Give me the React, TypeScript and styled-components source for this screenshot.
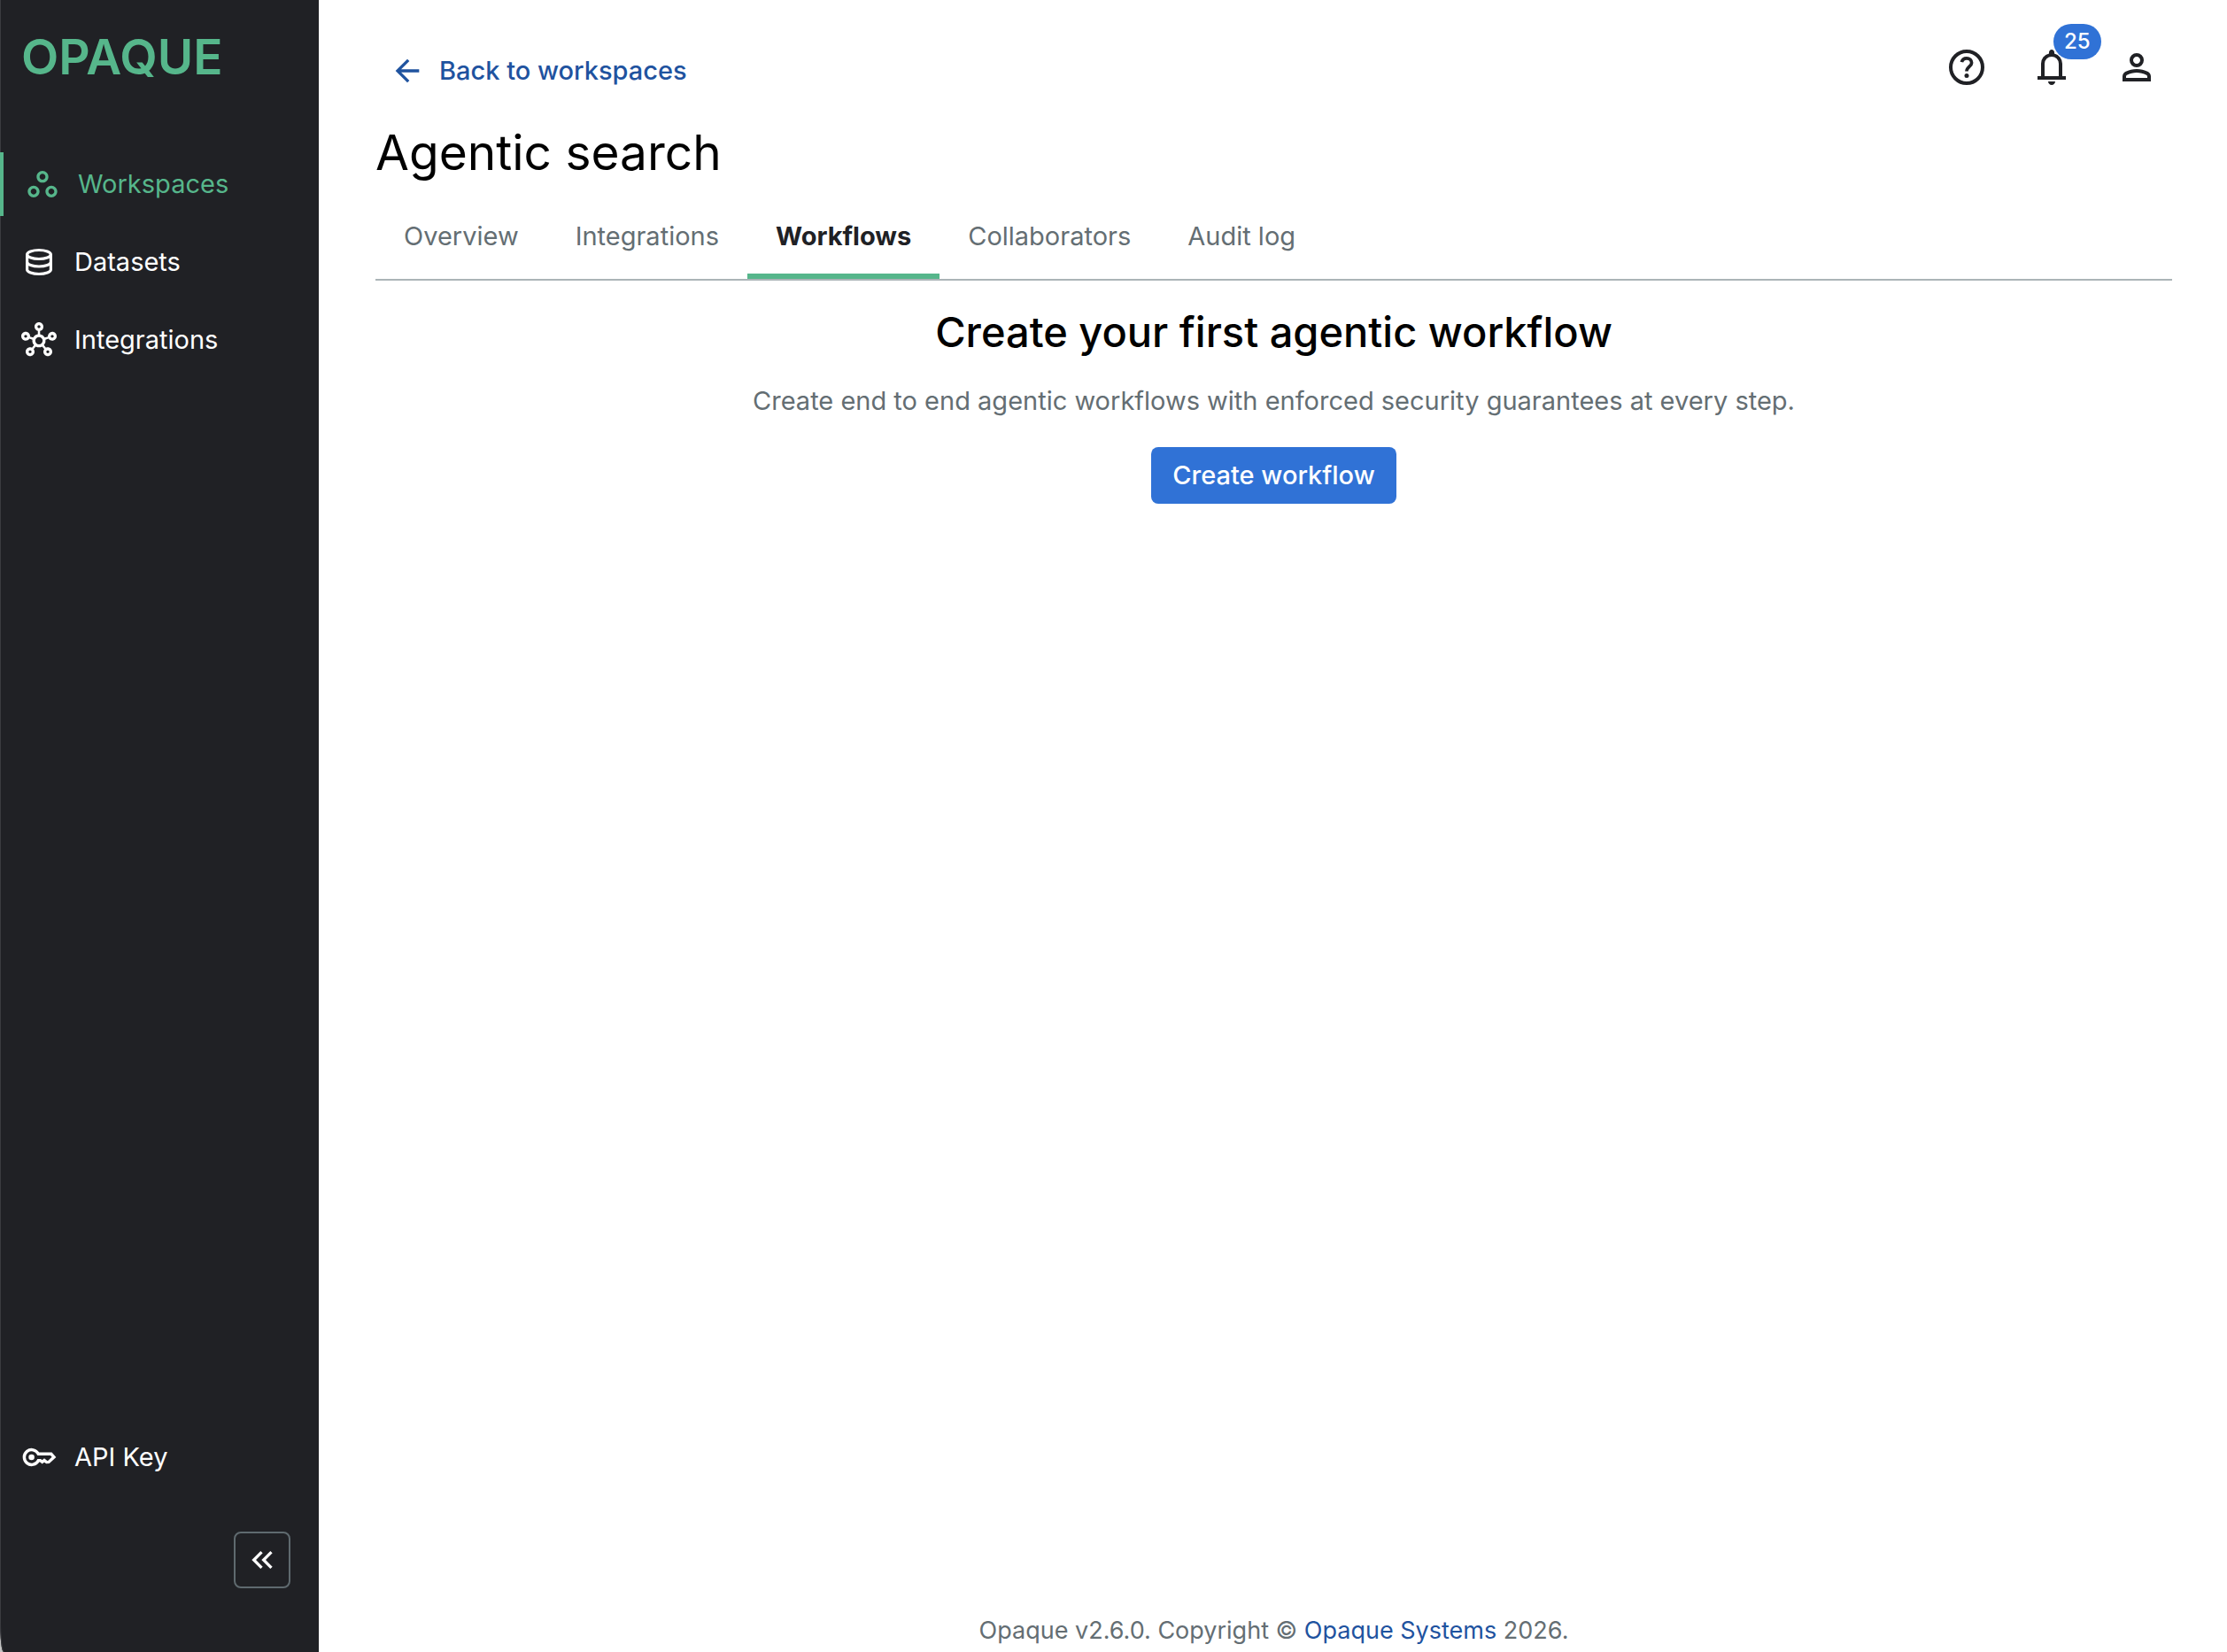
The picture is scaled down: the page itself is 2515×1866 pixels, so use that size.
import React from "react";
import styled, { createGlobalStyle, css } from "styled-components";
import {
  MdArrowBack,
  MdKeyboardDoubleArrowLeft,
  MdOutlineHub,
  MdOutlineWorkspaces,
} from "react-icons/md";

const color = {
  ink: "#202125",
  edge: "#3b3c40",
  green: "#56b68b",
  blue: "#3072d6",
  link: "#1f539f",
  muted: "#646e73",
  line: "#abb4b7",
  white: "#ffffff",
};

const GlobalStyle = createGlobalStyle`
  *, *::before, *::after { box-sizing: border-box; }
  body {
    margin: 0;
    background: ${color.white};
    font-family: Inter, "Liberation Sans", sans-serif;
    font-size: 29px;
    line-height: 40px;
  }
  a { color: inherit; text-decoration: none; }
  button { font: inherit; cursor: pointer; }
`;

const Shell = styled.div`
  display: flex;
  min-height: 100vh;
  background: linear-gradient(to right, #c4c4c4 50%, ${color.white} 50%);
`;

const Sidebar = styled.aside`
  display: flex;
  flex-direction: column;
  flex: 0 0 360px;
  padding: 32px 0 72px;
  color: ${color.white};
  background: ${color.ink};
  box-shadow: inset 1px 0 ${color.edge};
  border-bottom-left-radius: 4px 36px;
`;

const Logo = styled.a`
  padding: 0 24px;
  font-size: 55px;
  font-weight: 600;
  line-height: 64px;
  && { color: ${color.green}; }
`;

const Nav = styled.nav`
  display: flex;
  flex-direction: column;
  flex: 1;
  gap: 16px;
  margin-top: 76px;
`;

const NavItem = styled.a<{ $active?: boolean; $last?: boolean }>`
  display: flex;
  align-items: center;
  gap: 20px;
  height: 72px;
  padding: 0 24px;
  ${(p) => p.$last && css`margin-top: auto;`}
  ${(p) =>
    p.$active &&
    css`
      border-left: 4px solid ${color.green};
      && { color: ${color.green}; }
    `}
  svg { width: 40px; height: 40px; flex: none; }
`;

const Collapse = styled.button`
  display: grid;
  place-items: center;
  align-self: flex-end;
  width: 64px;
  height: 64px;
  margin: 48px 32px 0 0;
  padding: 0;
  color: ${color.white};
  background: none;
  border: 2px solid #5f6a6f;
  border-radius: 8px;
`;

const Main = styled.main`
  display: flex;
  flex-direction: column;
  flex: 1;
  min-width: 0;
  padding: 40px 62px 4px 64px;
  background: ${color.white};
`;

const TopBar = styled.header`
  display: flex;
  align-items: center;
  justify-content: space-between;
  height: 72px;
`;

const BackLink = styled.a`
  display: flex;
  align-items: center;
  gap: 16px;
  padding: 8px 16px 0;
  font-weight: 500;
  && { color: ${color.link}; }
`;

const Actions = styled.div`
  display: flex;
  gap: 32px;
  padding-right: 8px;
`;

const IconButton = styled.button`
  position: relative;
  display: grid;
  place-items: center;
  width: 64px;
  height: 64px;
  padding: 0;
  color: ${color.ink};
  background: none;
  border: 0;
  svg { width: 48px; height: 48px; }
`;

const Badge = styled.span`
  position: absolute;
  left: 34px;
  bottom: 41px;
  padding: 0 12px;
  color: ${color.white};
  background: ${color.blue};
  border-radius: 20px;
  font-size: 24px;
  font-weight: 500;
  line-height: 40px;
`;

const Title = styled.h1`
  margin: 24px 0 0;
  font-size: 55px;
  font-weight: 400;
  line-height: 72px;
  color: #000;
`;

const Tabs = styled.nav`
  display: flex;
  margin-top: 24px;
  border-bottom: 2px solid ${color.line};
`;

const Tab = styled.a<{ $active?: boolean }>`
  padding: 15px 32px 22px;
  border-bottom: 6px solid ${(p) => (p.$active ? color.green : "transparent")};
  && { color: ${(p) => (p.$active ? color.ink : color.muted)}; }
  font-weight: ${(p) => (p.$active ? 700 : 400)};
`;

const Empty = styled.section`
  display: flex;
  flex-direction: column;
  align-items: center;
  flex: 1;
  padding-top: 24px;
  text-align: center;
`;

const Heading = styled.h2`
  margin: 0;
  font-size: 47px;
  font-weight: 500;
  line-height: 68px;
  color: #000;
`;

const Lead = styled.p`
  margin: 24px 0 32px;
  color: ${color.muted};
`;

const Primary = styled.button`
  height: 64px;
  padding: 0 24px;
  color: ${color.white};
  background: ${color.blue};
  border: 0;
  border-radius: 8px;
  && { font-weight: 500; }
`;

const Footer = styled.footer`
  text-align: center;
  font-size: 27px;
  color: ${color.muted};
  a { color: ${color.link}; }
`;

const DatabaseIcon = () => (
  <svg viewBox="0 0 40 40" fill="none" stroke="currentColor" strokeWidth="3.2" aria-hidden="true">
    <ellipse cx="20" cy="11.5" rx="13.4" ry="5" />
    <path d="M6.6 11.5v17c0 2.8 6 5 13.4 5s13.4-2.2 13.4-5v-17" />
    <path d="M6.6 20c0 2.8 6 5 13.4 5s13.4-2.2 13.4-5" />
  </svg>
);

const KeyIcon = () => (
  <svg viewBox="0 0 40 40" fill="none" stroke="currentColor" strokeWidth="3.4" aria-hidden="true">
    <path d="M19.3 16.3A8.4 8.4 0 1 0 19.3 23.7H21.500L23.700 25.300L26 23.500L28.600 25.600L31 25.400L37 19.800L33.800 16.3Z" />
    <circle cx="11.6" cy="20" r="3.3" fill="currentColor" stroke="none" />
  </svg>
);

const HelpIcon = () => (
  <svg viewBox="0 0 24 24" fill="none" stroke="currentColor" strokeWidth="2" aria-hidden="true">
    <circle cx="12" cy="12" r="9" />
    <path strokeWidth="1.85" d="M9.2 9.1C9.5 7.7 10.6 6.9 12 6.9c1.7 0 2.8 1.1 2.8 2.6 0 2-2.8 2.2-2.8 4.8" />
    <circle cx="12" cy="16.8" r="1.25" fill="currentColor" stroke="none" />
  </svg>
);

const BellIcon = () => (
  <svg viewBox="0 0 24 24" fill="currentColor" aria-hidden="true">
    <path d="M4 19v-2h2v-7q0-2.075 1.25-3.688T10.5 4.2v-.7q0-.625.438-1.062T12 2t1.063.438T13.5 3.5v.7q2 .5 3.25 2.113T18 10v7h2v2zm8 3q-.825 0-1.412-.587T10 20h4q0 .825-.587 1.413T12 22m-4-5h8v-7q0-1.65-1.175-2.825T12 6 9.175 7.175 8 10z" />
  </svg>
);

const PersonIcon = () => (
  <svg viewBox="0 0 24 24" fill="currentColor" aria-hidden="true">
    <path d="M12 12q-1.65 0-2.825-1.175T8 8t1.175-2.825T12 4t2.825 1.175T16 8t-1.175 2.825T12 12m-8 8v-2.8q0-.85.438-1.562T5.6 14.55q1.55-.775 3.15-1.162T12 13t3.25.388 3.15 1.162q.725.375 1.163 1.088T20 17.2V20zm2-2h12v-.8q0-.275-.137-.5t-.363-.35q-1.35-.675-2.725-1.012T12 15t-2.775.338T6.5 16.35q-.225.125-.363.35T6 17.2zm6-8q.825 0 1.413-.587T14 8t-.587-1.412T12 6t-1.412.588T10 8t.588 1.413T12 10" />
  </svg>
);

const tabs = ["Overview", "Integrations", "Workflows", "Collaborators", "Audit log"];

export default function App() {
  return (
    <>
      <GlobalStyle />
      <Shell>
        <Sidebar>
          <Logo href="#home">OPAQUE</Logo>
          <Nav aria-label="Main">
            <NavItem href="#workspaces" $active aria-current="page">
              <MdOutlineWorkspaces aria-hidden="true" />
              Workspaces
            </NavItem>
            <NavItem href="#datasets">
              <DatabaseIcon />
              Datasets
            </NavItem>
            <NavItem href="#integrations">
              <MdOutlineHub aria-hidden="true" />
              Integrations
            </NavItem>
            <NavItem href="#api-key" $last>
              <KeyIcon />
              API Key
            </NavItem>
          </Nav>
          <Collapse type="button" aria-label="Collapse sidebar">
            <MdKeyboardDoubleArrowLeft size={40} aria-hidden="true" />
          </Collapse>
        </Sidebar>
        <Main>
          <TopBar>
            <BackLink href="#workspaces">
              <MdArrowBack size={40} aria-hidden="true" />
              Back to workspaces
            </BackLink>
            <Actions>
              <IconButton type="button" aria-label="Help">
                <HelpIcon />
              </IconButton>
              <IconButton type="button" aria-label="Notifications">
                <BellIcon />
                <Badge>25</Badge>
              </IconButton>
              <IconButton type="button" aria-label="Account">
                <PersonIcon />
              </IconButton>
            </Actions>
          </TopBar>
          <Title>Agentic search</Title>
          <Tabs aria-label="Workspace">
            {tabs.map((name) => (
              <Tab
                key={name}
                href={"#" + name.toLowerCase().replace(" ", "-")}
                $active={name === "Workflows"}
                aria-current={name === "Workflows" ? "page" : undefined}
              >
                {name}
              </Tab>
            ))}
          </Tabs>
          <Empty>
            <Heading>Create your first agentic workflow</Heading>
            <Lead>
              Create end to end agentic workflows with enforced security guarantees at every step.
            </Lead>
            <Primary type="button">Create workflow</Primary>
          </Empty>
          <Footer>
            Opaque v2.6.0. Copyright © <a href="#opaque-systems">Opaque Systems</a> 2026.
          </Footer>
        </Main>
      </Shell>
    </>
  );
}
